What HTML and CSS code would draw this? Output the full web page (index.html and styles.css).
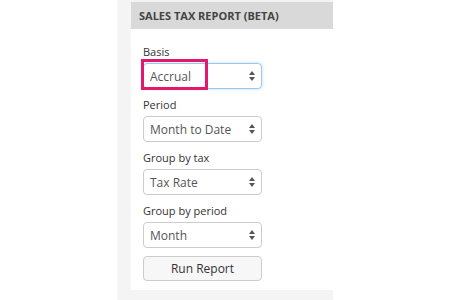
FILE: index.html
```html
<!DOCTYPE html>
<html lang="en">
<head>
    <meta charset="UTF-8">
    <title>Sales Tax Report</title>
    <link rel="stylesheet" href="styles.css">
</head>
<body>
    <div class="sidebar">
        <div class="card">
            <div class="card-header">SALES TAX REPORT (BETA)</div>
            <div class="card-body">
                <div class="field">
                    <label>Basis</label>
                    <div class="select focused">
                        <span>Accrual</span>
                        <svg class="arrows" width="6" height="10" viewBox="0 0 6 10"><path d="M3 0L6 4H0Z M3 10L6 6H0Z" fill="#555"/></svg>
                    </div>
                    <div class="highlight"></div>
                </div>
                <div class="field">
                    <label>Period</label>
                    <div class="select">
                        <span>Month to Date</span>
                        <svg class="arrows" width="6" height="10" viewBox="0 0 6 10"><path d="M3 0L6 4H0Z M3 10L6 6H0Z" fill="#555"/></svg>
                    </div>
                </div>
                <div class="field">
                    <label>Group by tax</label>
                    <div class="select">
                        <span>Tax Rate</span>
                        <svg class="arrows" width="6" height="10" viewBox="0 0 6 10"><path d="M3 0L6 4H0Z M3 10L6 6H0Z" fill="#555"/></svg>
                    </div>
                </div>
                <div class="field">
                    <label>Group by period</label>
                    <div class="select">
                        <span>Month</span>
                        <svg class="arrows" width="6" height="10" viewBox="0 0 6 10"><path d="M3 0L6 4H0Z M3 10L6 6H0Z" fill="#555"/></svg>
                    </div>
                </div>
                <button class="run-btn">Run Report</button>
            </div>
        </div>
    </div>
</body>
</html>
```

FILE: styles.css
```css
body {
    margin: 0;
    background-color: #fff;
    font-family: "Open Sans", sans-serif;
    color: #333;
}
.sidebar {
    margin-left: 117px;
    width: 216px;
    height: 300px;
    box-sizing: border-box;
    padding: 2px 0 10px 14px;
    background-color: #f4f4f4;
}
.card {
    background-color: #fff;
    height: 100%;
    display: flex;
    flex-direction: column;
}
.card-header {
    height: 27px;
    line-height: 27px;
    padding-left: 8px;
    background-color: #d9d9d9;
    font-size: 11px;
    font-weight: bold;
    color: #444;
}
.card-body {
    padding: 15px 0 0 12px;
}
.field {
    position: relative;
    margin-bottom: 8px;
}
.field label {
    display: block;
    font-size: 11px;
    line-height: 15px;
    margin-bottom: 4px;
}
.select {
    width: 119px;
    height: 26px;
    box-sizing: border-box;
    border: 1px solid #ccc;
    border-radius: 4px;
    display: flex;
    align-items: center;
    justify-content: space-between;
    padding: 0 6px 0 6px;
    font-size: 12px;
    color: #555;
}
.select.focused {
    border-color: #9cc7ee;
    box-shadow: 0 0 3px rgba(102, 175, 233, 0.5);
}
.highlight {
    position: absolute;
    left: -2px;
    top: 15px;
    width: 67px;
    height: 31px;
    box-sizing: border-box;
    border: 3px solid #e5196a;
}
.run-btn {
    width: 119px;
    height: 25px;
    border: 1px solid #ccc;
    border-radius: 4px;
    background-color: #f7f7f7;
    font-family: "Open Sans", sans-serif;
    font-size: 12px;
    color: #333;
}
```
